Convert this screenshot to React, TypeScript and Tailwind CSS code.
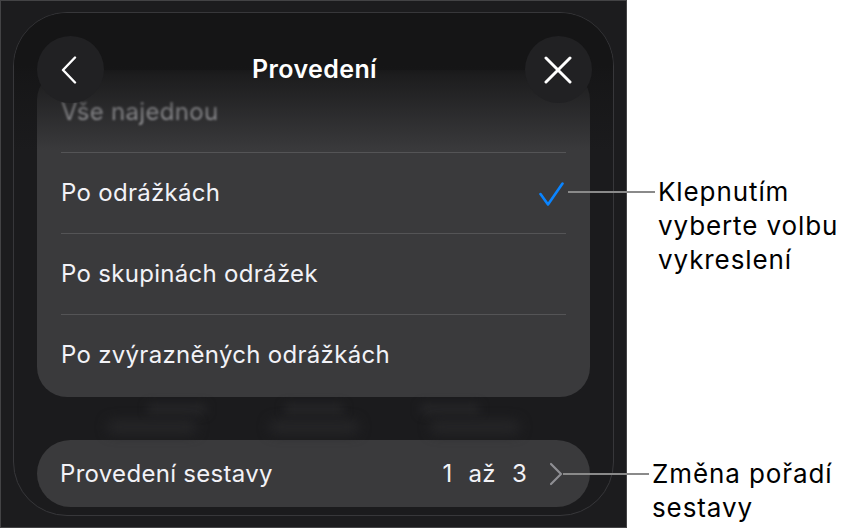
import React from "react";

const FONT = { fontFamily: 'Inter, "Noto Sans", "Liberation Sans", sans-serif' };

function Row({ label, checked }: { label: string; checked?: boolean }) {
  return (
    <div className="mx-[24px] h-[81px] border-t border-[#545456] flex items-center justify-between">
      <span className="text-[24px] text-[#f2f2f7] tracking-[0.3px]">{label}</span>
      {checked && (
        <svg width="25" height="24" viewBox="0 0 25 24" className="mr-[2px] mt-[2px]" fill="none">
          <path d="M1.5 12 L9 22.5 L23.5 1.5" stroke="#0a84ff" strokeWidth="2.6" strokeLinecap="round" strokeLinejoin="round" />
        </svg>
      )}
    </div>
  );
}

export default function App() {
  return (
    <div className="relative w-[851px] h-[529px] bg-white flex" style={FONT}>
      {/* screenshot panel */}
      <div className="w-[627px] h-[528px] bg-[#1c1c1e] border border-[#434345] pt-[11px] pl-[12px]">
        <div className="relative w-[601px] h-[504px] rounded-[54px] border border-[#37373a] bg-[#1b1b1d] overflow-hidden pt-[57px] px-[23px]">
          {/* list card */}
          <div className="relative h-[327px] rounded-[30px] bg-[#3a3a3c] flex flex-col overflow-hidden">
            <div className="mx-[24px] h-[82px] flex items-center pt-[1px]">
              <span className="text-[24px] text-[#c4c4c8] tracking-[0.3px] blur-[1.2px]">Vše najednou</span>
            </div>
            <Row label="Po odrážkách" checked />
            <Row label="Po skupinách odrážek" />
            <Row label="Po zvýrazněných odrážkách" />
          </div>

          {/* blurred background content between card and pill */}
          <div className="h-[43px] flex flex-col justify-center gap-[6px] px-[70px]">
            <div className="flex justify-between px-[40px]">
              <div className="w-[60px] h-[10px] rounded-full bg-[#262628] blur-[5px]" />
              <div className="w-[60px] h-[10px] rounded-full bg-[#262628] blur-[5px]" />
              <div className="w-[60px] h-[10px] rounded-full bg-[#262628] blur-[5px]" />
            </div>
            <div className="flex justify-between">
              <div className="w-[90px] h-[14px] rounded-full bg-[#252527] blur-[6px]" />
              <div className="w-[90px] h-[14px] rounded-full bg-[#252527] blur-[6px]" />
              <div className="w-[90px] h-[14px] rounded-full bg-[#252527] blur-[6px]" />
            </div>
          </div>

          {/* bottom pill */}
          <div className="h-[67px] rounded-full bg-[#3a3a3c] flex items-center pl-[23px] pr-[27px]">
            <span className="text-[24px] text-[#f2f2f7] tracking-[0.3px]">Provedení sestavy</span>
            <span className="ml-auto flex items-center gap-[16px] text-[24px] text-[#f2f2f7] tracking-[0.3px]">
              <span>1</span>
              <span>až</span>
              <span>3</span>
            </span>
            <svg width="14" height="24" viewBox="0 0 14 24" className="ml-[22px]" fill="none">
              <path d="M2 2 L12 12 L2 22" stroke="#8e8e93" strokeWidth="2.2" strokeLinecap="round" strokeLinejoin="round" />
            </svg>
          </div>

          {/* header fade overlay */}
          <div className="absolute left-0 right-0 top-0 h-[138px] bg-[linear-gradient(to_bottom,#151516_0%,#151516_38%,rgba(21,21,22,0.8)_45%,rgba(21,21,22,0)_100%)] pointer-events-none" />

          {/* header */}
          <div className="absolute left-[23px] right-[21px] top-[23px] h-[67px] flex items-center justify-between">
            <div className="w-[67px] h-[67px] rounded-full bg-[#212123] flex items-center justify-center">
              <svg width="18" height="28" viewBox="0 0 18 28" fill="none" className="mr-[4px]">
                <path d="M15 1.5 L3 14 L15 26.5" stroke="#ffffff" strokeWidth="2.4" strokeLinecap="round" strokeLinejoin="round" />
              </svg>
            </div>
            <span className="text-[25px] font-semibold text-white tracking-[0.4px]">Provedení</span>
            <div className="w-[67px] h-[67px] rounded-full bg-[#212123] flex items-center justify-center">
              <svg width="28" height="28" viewBox="0 0 28 28" fill="none">
                <path d="M2 2 L26 26 M26 2 L2 26" stroke="#ffffff" strokeWidth="3" strokeLinecap="round" />
              </svg>
            </div>
          </div>
        </div>
      </div>

      {/* callouts */}
      <div className="absolute left-[568px] top-[191px] w-[87px] h-[2px] bg-[#8a8a8a]" />
      <div className="absolute left-[658px] top-[175px] text-[26px] leading-[34px] tracking-[0.9px] text-black">
        Klepnutím
        <br />
        vyberte volbu
        <br />
        vykreslení
      </div>

      <div className="absolute left-[563px] top-[473px] w-[86px] h-[2px] bg-[#8a8a8a]" />
      <div className="absolute left-[652px] top-[457px] text-[26px] leading-[34px] tracking-[0.9px] text-black">
        Změna pořadí
        <br />
        sestavy
      </div>
    </div>
  );
}
